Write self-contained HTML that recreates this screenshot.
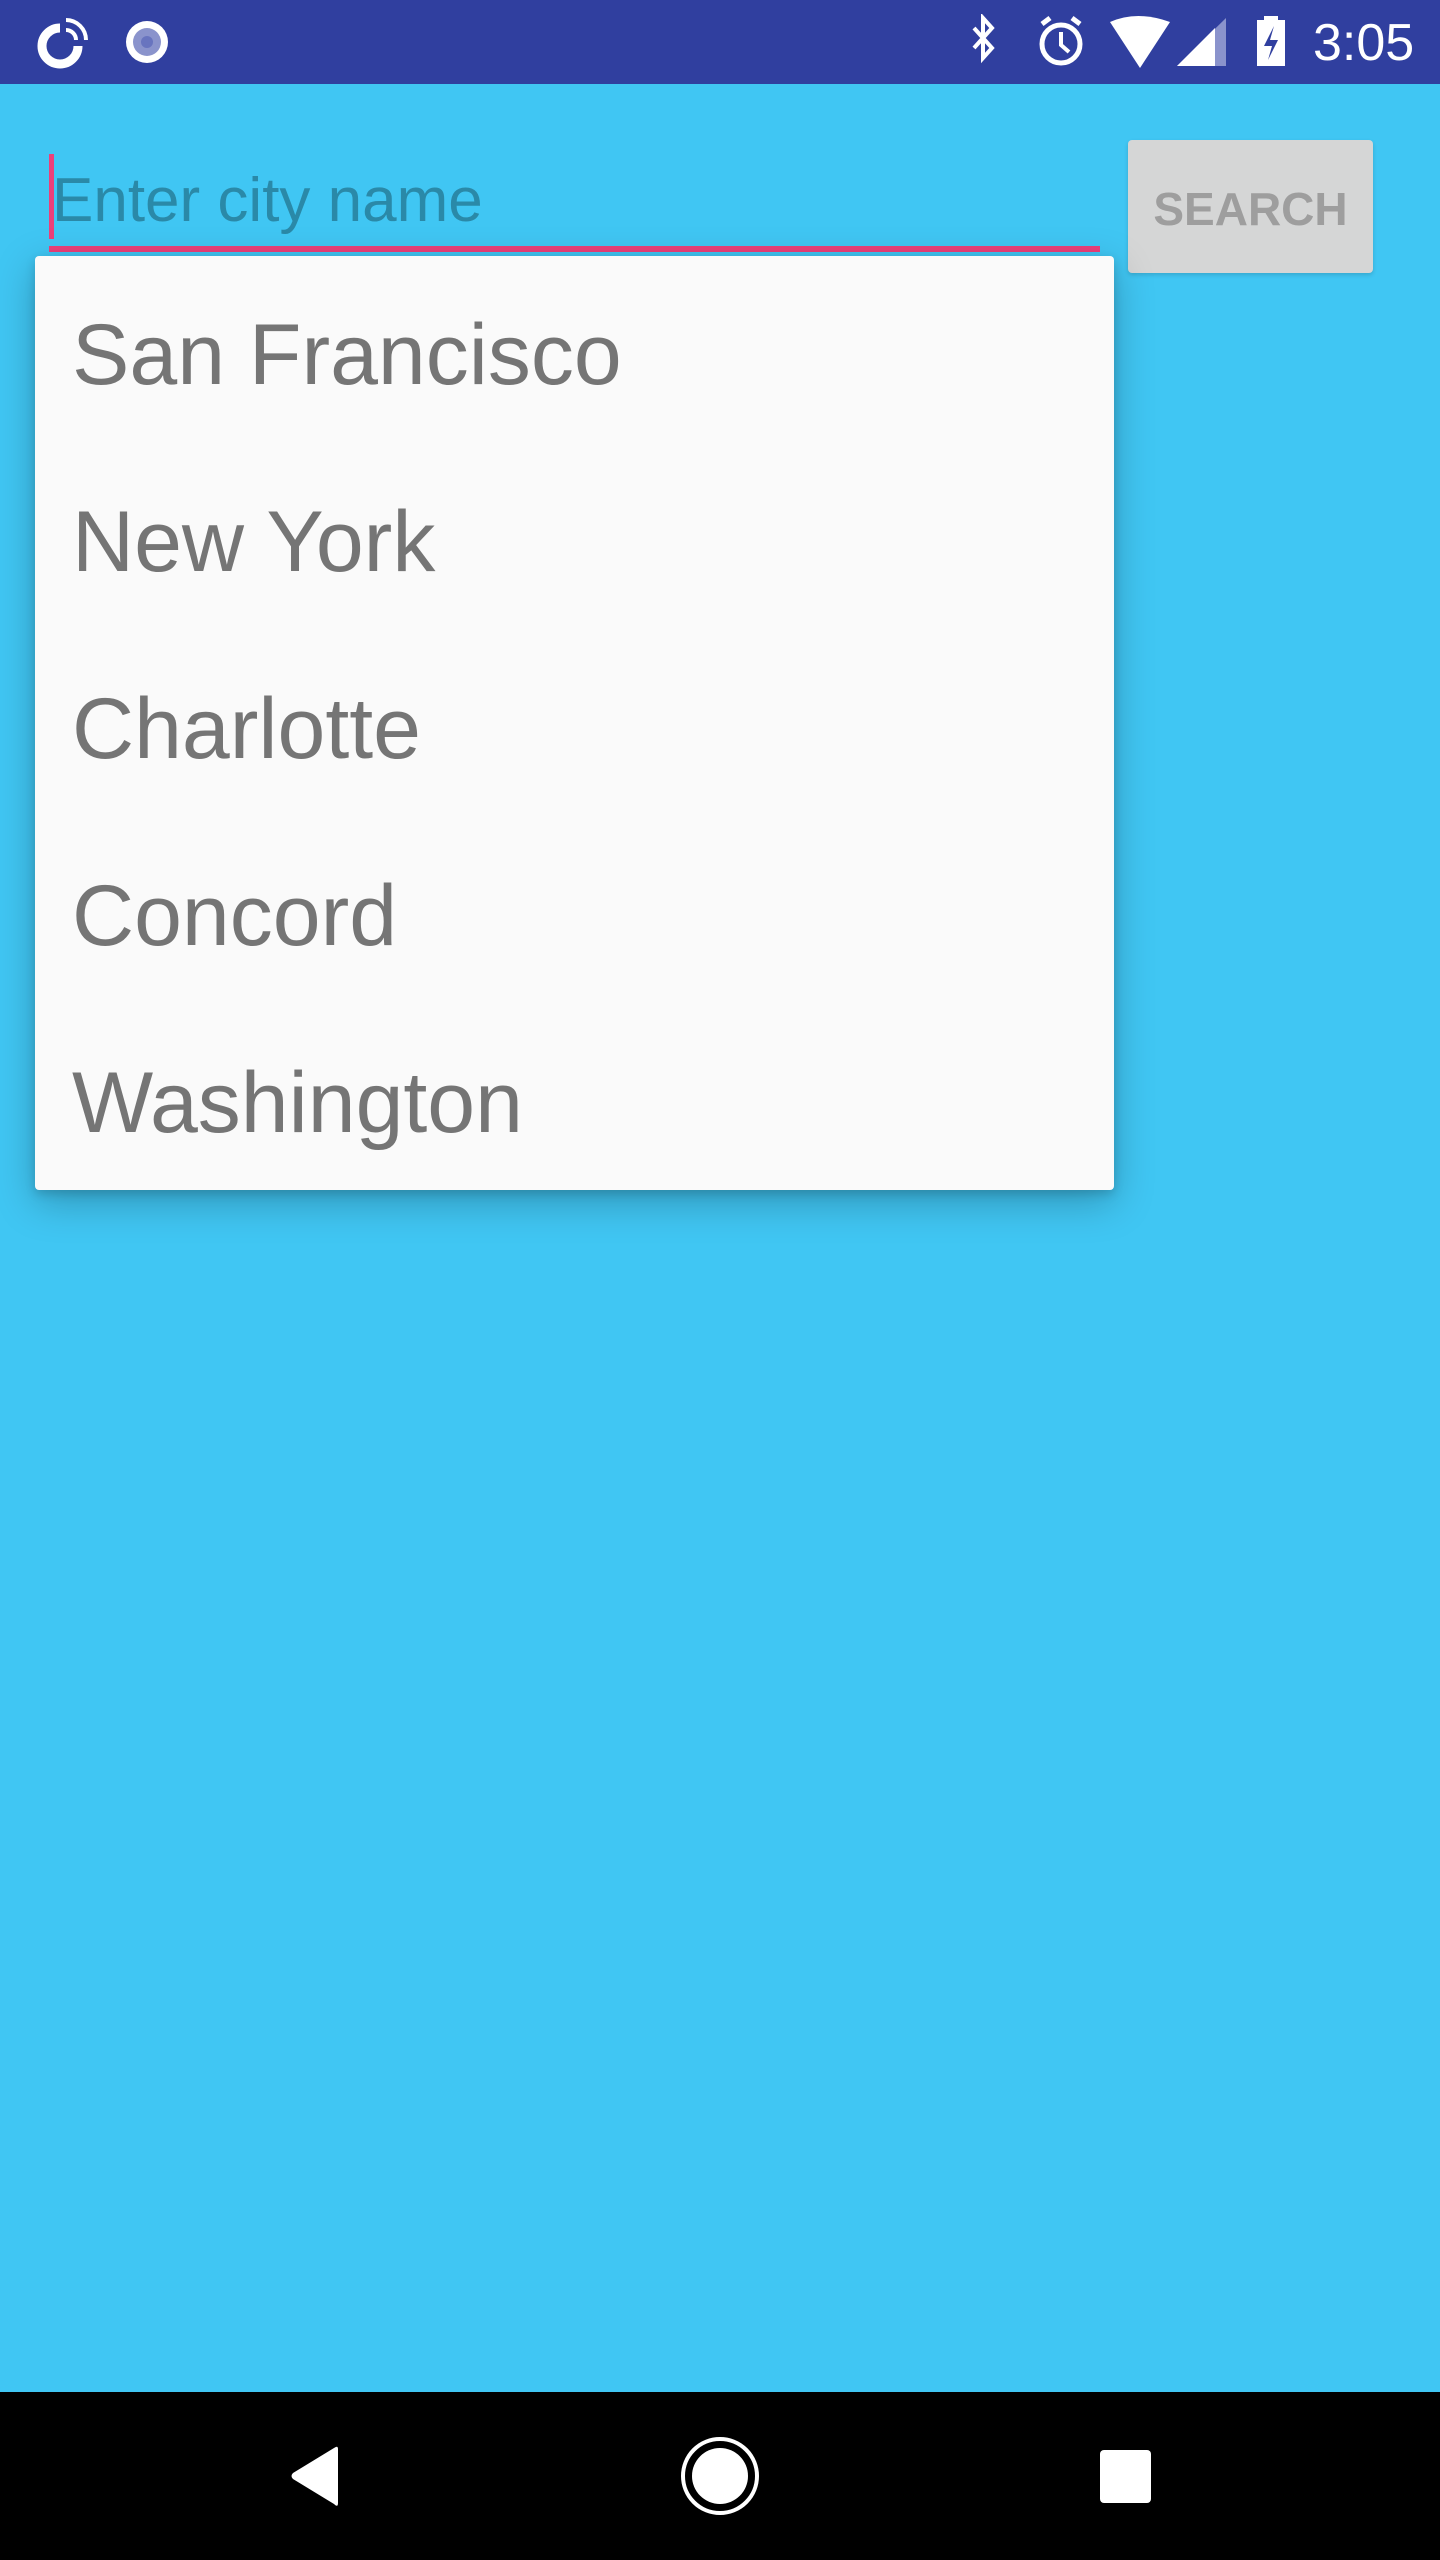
<!DOCTYPE html>
<html><head><style>
html,body{margin:0;padding:0}
body{width:1440px;height:2560px;position:relative;background:#40c6f3;overflow:hidden;font-family:"Liberation Sans",sans-serif}
.abs{position:absolute}
.item{position:absolute;left:72px;font-size:86px;color:#757575;line-height:1;white-space:nowrap}
</style></head><body>
<div class="abs" style="left:0;top:0;width:1440px;height:84px;background:#303f9f"></div>
<svg class="abs" style="left:30px;top:10px" width="150" height="64" viewBox="0 0 150 64">
<path d="M30 18 A18 18 0 1 0 48 36" fill="none" stroke="#fff" stroke-width="9"/>
<path d="M36 10 A20 20 0 0 1 56 30 M36 20 A10 10 0 0 1 46 30" fill="none" stroke="#fff" stroke-width="4"/>
<circle cx="117" cy="32" r="21" fill="#fff"/><circle cx="117" cy="32" r="14" fill="#8a93cc"/><circle cx="117" cy="32" r="6" fill="#6874bf"/>
</svg>
<svg class="abs" style="left:970px;top:14px" width="340" height="56" viewBox="0 0 340 56">
<path d="M4 14 L22 34 L13 44 L13 4 L22 14 L4 34" fill="none" stroke="#fff" stroke-width="4"/>
<circle cx="91" cy="30" r="19" fill="none" stroke="#fff" stroke-width="5"/>
<path d="M91 18 V31 L99 38" fill="none" stroke="#fff" stroke-width="4"/>
<path d="M72 10 L80 4 M110 10 L102 4" stroke="#fff" stroke-width="5"/>
<path d="M140 8 Q167 -4 200 8 L170 54 Z" fill="#fff"/>
<path d="M207 52 L256 4 L256 52 Z" fill="#8a93cc"/>
<path d="M207 52 L245 14 L245 52 Z" fill="#fff"/>
<rect x="287" y="6" width="28" height="46" fill="#fff"/><rect x="294" y="2" width="14" height="6" fill="#fff"/>
<path d="M304 12 L294 32 L302 32 L298 46 L308 26 L300 26 Z" fill="#303f9f"/>
</svg>
<div class="abs" style="left:1313px;top:17px;font-size:52px;color:#fff;line-height:1">3:05</div>

<div class="abs" style="left:49px;top:154px;width:5px;height:85px;background:#ec407a"></div>
<div class="abs" style="left:52px;top:170px;font-size:62px;color:#2a89a8;line-height:1">Enter city name</div>
<div class="abs" style="left:49px;top:246px;width:1051px;height:6px;background:#ec407a"></div>
<div class="abs" style="left:1128px;top:140px;width:245px;height:133px;background:#d5d6d6;border-radius:4px;box-shadow:0 2px 4px rgba(0,0,0,.15)"></div>
<div class="abs" style="left:1128px;top:186px;width:245px;text-align:center;font-size:46px;font-weight:bold;color:#9e9e9e;line-height:1">SEARCH</div>

<div class="abs" style="left:35px;top:256px;width:1079px;height:934px;background:#fafafa;border-radius:4px;box-shadow:0 12px 40px rgba(0,0,0,.25),0 4px 10px rgba(0,0,0,.15)"></div>
<div class="item" style="top:312px">San Francisco</div>
<div class="item" style="top:499px">New York</div>
<div class="item" style="top:686px">Charlotte</div>
<div class="item" style="top:873px">Concord</div>
<div class="item" style="top:1060px">Washington</div>

<div class="abs" style="left:0;top:2392px;width:1440px;height:168px;background:#000"></div>
<svg class="abs" style="left:0;top:2392px" width="1440" height="168" viewBox="0 0 1440 168">
<path d="M338 57 L338 111 Q338 116 334 112 L293 87 Q290 84 293 81 L334 56 Q338 53 338 57 Z" fill="#fff"/>
<circle cx="720" cy="84" r="37" fill="none" stroke="#fff" stroke-width="4"/>
<circle cx="720" cy="84" r="28" fill="#fff"/>
<rect x="1100" y="58" width="51" height="53" rx="4" fill="#fff"/>
</svg>
</body></html>
